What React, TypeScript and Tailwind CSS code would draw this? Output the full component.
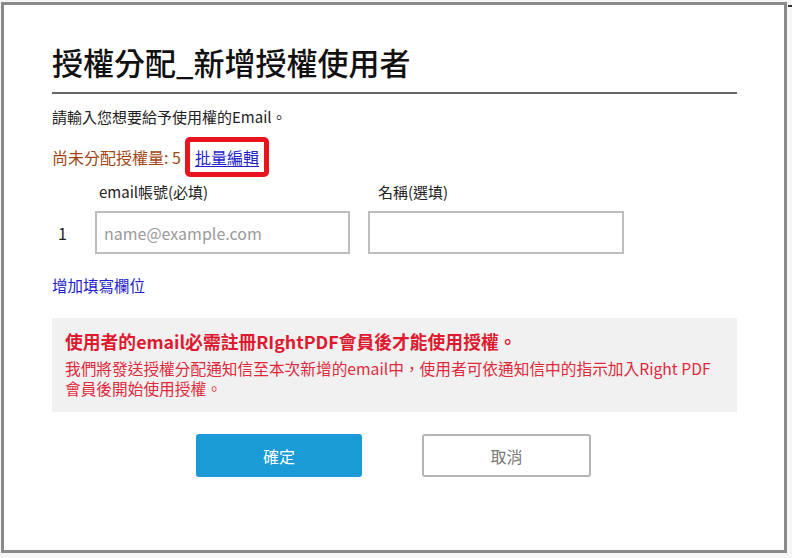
export default function App() {
  return (
    <div
      className="w-[792px] h-[558px] bg-[#f6f6f6] overflow-hidden relative"
      style={{ fontFamily: '"Noto Sans CJK TC", "Noto Sans", sans-serif' }}
    >
      <div className="absolute right-0 top-[5px] w-[4px] h-[2px] bg-[#333]" />
      <div className="ml-[1px] mt-[2px] w-[786px] h-[551px] border-[3px] border-[#8a8a8a] bg-white pl-[48px]">
        <div className="w-[685px]">
          <h1 className="mt-[37px] h-[40px] leading-[40px] text-[31px] text-[#111] font-medium">
            授權分配_新增授權使用者
          </h1>
          <div className="mt-[10px] h-[2px] bg-[#666]" />

          <p className="mt-[13px] h-[20px] leading-[20px] text-[15px] text-[#222]">
            請輸入您想要給予使用權的Email。
          </p>

          <div className="mt-[10px] h-[40px] flex items-center">
            <span className="text-[16px] leading-[20px] text-[#a24512]">尚未分配授權量: 5</span>
            <div className="ml-[4px] h-[40px] px-[5px] flex items-center border-[5px] border-[#e8141e] rounded-[5px]">
              <a href="#" className="text-[16px] leading-[20px] text-[#2222cc] underline underline-offset-2">
                批量編輯
              </a>
            </div>
          </div>

          <div className="mt-[5px] h-[20px] flex text-[15px] leading-[20px] text-[#222]">
            <span className="ml-[47px] w-[280px]">email帳號(必填)</span>
            <span className="ml-[-1px]">名稱(選填)</span>
          </div>

          <div className="mt-[9px] flex items-center">
            <span className="w-[43px] pl-[6px] text-[16px] text-[#222]">1</span>
            <input
              className="w-[255px] h-[43px] border-2 border-[#bdbdbd] px-[7px] text-[16px] text-[#333] placeholder:text-[#9a9a9a] outline-none"
              placeholder="name@example.com"
            />
            <input className="ml-[18px] w-[256px] h-[43px] border-2 border-[#bdbdbd] px-[7px] text-[16px] outline-none" />
          </div>

          <a href="#" className="mt-[21px] block h-[20px] leading-[20px] text-[15.5px] text-[#2222cc] w-fit">
            增加填寫欄位
          </a>

          <div className="mt-[23px] h-[94px] bg-[#f1f1f1] px-[13px] pt-[12px]">
            <p className="text-[17.8px] leading-[22px] font-bold text-[#de1a30]">
              使用者的email必需註冊RIghtPDF會員後才能使用授權。
            </p>
            <p className="mt-[7px] text-[15.7px] leading-[20px] text-[#e02a3c]">
              我們將發送授權分配通知信至本次新增的email中，使用者可依通知信中的指示加入Right PDF 會員後開始使用授權。
            </p>
          </div>

          <div className="mt-[22px] flex">
            <button className="ml-[144px] w-[166px] h-[43px] rounded-[3px] bg-[#1a9bd6] text-white text-[16px]">
              確定
            </button>
            <button className="ml-[60px] w-[169px] h-[43px] rounded-[3px] border-2 border-[#b5b5b5] bg-white text-[#7a7a7a] text-[16px]">
              取消
            </button>
          </div>
        </div>
      </div>
    </div>
  );
}
